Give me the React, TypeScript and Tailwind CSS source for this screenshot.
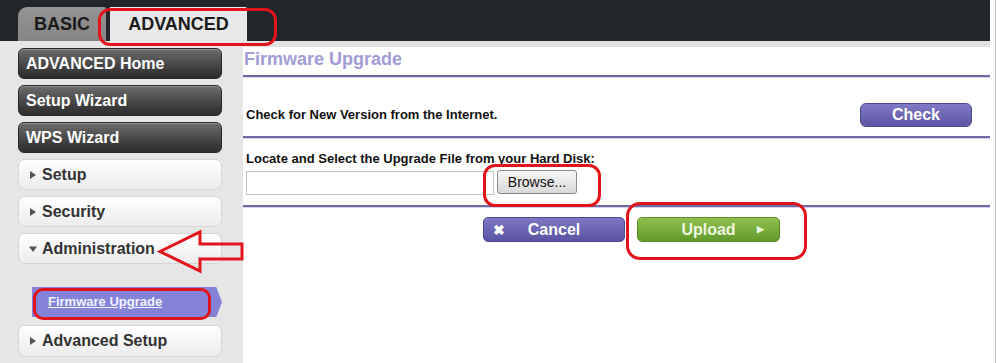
import React from "react";

const darkBtn =
  "h-[31px] w-[204px] rounded-[6px] border border-[#2a2a2a] bg-linear-to-b from-[#6d6d6d] via-[#4a4a4a] to-[#2c2c2c] text-white font-bold text-[16px] flex items-center pl-[7px] shadow-[inset_0_1px_0_rgba(255,255,255,0.25)]";
const lightBtn =
  "h-[31px] w-[204px] rounded-[7px] border border-[#d6d6d6] bg-linear-to-b from-[#ffffff] to-[#ececec] text-[#333] font-bold text-[16px] flex items-center pl-[10px]";

function Tri({ down = false }: { down?: boolean }) {
  return (
    <svg width="8" height="8" viewBox="0 0 8 8" className="mr-[5px] shrink-0">
      {down ? <polygon points="0,1.5 8,1.5 4,7" fill="#555" /> : <polygon points="1,0 7,4 1,8" fill="#555" />}
    </svg>
  );
}

function Line() {
  return <div className="h-[3px] w-full border-t-2 border-[#6f69a6] bg-[#d4d1ea]" />;
}

export default function App() {
  return (
    <div className="relative w-[996px] h-[363px] overflow-hidden bg-white flex font-['Liberation_Sans',Arial,sans-serif]">
      <div className="w-[990px] flex flex-col">
        <header className="h-[41px] shrink-0 bg-[#222529] flex items-end pl-[18px]">
          <div className="h-[34px] w-[88px] rounded-tl-[9px] rounded-tr-[2px] bg-linear-to-b from-[#959595] to-[#848484] flex items-center justify-center text-[18px] font-bold text-[#1a1a1a]">
            BASIC
          </div>
          <div className="w-[4px]" />
          <div className="h-[34px] w-[137px] rounded-tr-[2px] bg-[#e9e9e9] flex items-center justify-center text-[18px] font-bold text-[#1a1a1a]">
            ADVANCED
          </div>
        </header>
        <div className="flex flex-1">
          <aside className="w-[243px] shrink-0 bg-[#e6e6e6] pt-[7px] pl-[18px] flex flex-col">
            <div className={darkBtn}>ADVANCED Home</div>
            <div className={darkBtn + " mt-[6px]"}>Setup Wizard</div>
            <div className={darkBtn + " mt-[6px]"}>WPS Wizard</div>
            <div className={lightBtn + " mt-[6px]"}>
              <Tri />
              Setup
            </div>
            <div className={lightBtn + " mt-[6px]"}>
              <Tri />
              Security
            </div>
            <div className={lightBtn + " mt-[6px]"}>
              <Tri down />
              Administration
            </div>
            <div className="mt-[23px] ml-[14px] h-[30px] w-[190px] bg-[#8583d8] [clip-path:polygon(0_0,97%_0,100%_50%,97%_100%,0_100%)] flex items-center pl-[16px]">
              <span className="text-[13px] font-bold text-[#f2f2ff] underline">Firmware Upgrade</span>
            </div>
            <div className={lightBtn + " mt-[8px] h-[32px]"}>
              <Tri />
              Advanced Setup
            </div>
          </aside>
          <main className="flex-1 flex flex-col">
            <div className="h-[6px] bg-[#e3e3e3]" />
            <div className="mt-[1px] h-[22px] pl-[1px] text-[18px] leading-[22px] font-bold text-[#a29cd6]">
              Firmware Upgrade
            </div>
            <div className="mt-[5px]">
              <Line />
            </div>
            <div className="h-[58px] pt-[15px] flex items-center justify-between pl-[3px] pr-[18px]">
              <span className="text-[13px] font-bold text-[#111]">Check for New Version from the Internet.</span>
              <div className="h-[24px] w-[112px] rounded-[6px] border border-[#4d4891] bg-linear-to-b from-[#7f79c6] to-[#5b55a3] text-white font-bold text-[16px] flex items-center justify-center">
                Check
              </div>
            </div>
            <Line />
            <div className="mt-[12px] pl-[3px] h-[16px] text-[13px] leading-[16px] font-bold text-[#111]">
              Locate and Select the Upgrade File from your Hard Disk:
            </div>
            <div className="mt-[4px] pl-[3px] flex items-start">
              <div className="h-[24px] w-[248px] border border-[#c4c4c4] bg-white" />
              <div className="-mt-[1px] ml-[3px] h-[24px] w-[80px] rounded-[3px] border border-[#8a8a8a] bg-linear-to-b from-[#f6f6f6] to-[#d9d9d9] flex items-center justify-center text-[14px] text-[#111]">
                Browse...
              </div>
            </div>
            <div className="mt-[10px]">
              <Line />
            </div>
            <div className="mt-[9px] pl-[240px] flex gap-[12px]">
              <div className="h-[25px] w-[142px] rounded-[5px] border border-[#4d4891] bg-linear-to-b from-[#7d77c4] to-[#5a54a2] text-white font-bold text-[16px] grid grid-cols-[24px_1fr_24px] items-center">
                <span className="pl-[9px] text-[14px] leading-none">✖</span>
                <span className="text-center">Cancel</span>
                <span />
              </div>
              <div className="h-[25px] w-[143px] rounded-[5px] border border-[#5c8f2a] bg-linear-to-b from-[#8fc04c] to-[#62992c] text-[#eef7e0] font-bold text-[16px] grid grid-cols-[24px_1fr_24px] items-center">
                <span />
                <span className="text-center">Upload</span>
                <span className="text-[9px] pl-[2px]">▶</span>
              </div>
            </div>
          </main>
        </div>
      </div>
      <div className="w-[6px] border-r border-[#bdbdbd] bg-white" />

      {/* red annotations */}
      <div className="absolute left-[98px] top-[8px] w-[179px] h-[38px] rounded-[12px] border-[3px] border-[#e2141b]" />
      <div className="absolute left-[483px] top-[164px] w-[118px] h-[43px] rounded-[12px] border-[3px] border-[#e2141b]" />
      <div className="absolute left-[626px] top-[202px] w-[181px] h-[58px] rounded-[14px] border-[3px] border-[#e2141b]" />
      <div className="absolute left-[33px] top-[288px] w-[178px] h-[32px] rounded-[10px] border-[3px] border-[#e2141b]" />
      <svg className="absolute left-[155px] top-[228px]" width="92" height="48" viewBox="0 0 92 48">
        <polygon
          points="5,23.5 45,4 45,16 87,16 87,31 45,31 45,43"
          fill="none"
          stroke="#e2141b"
          strokeWidth="3"
          strokeLinejoin="miter"
        />
      </svg>
    </div>
  );
}
